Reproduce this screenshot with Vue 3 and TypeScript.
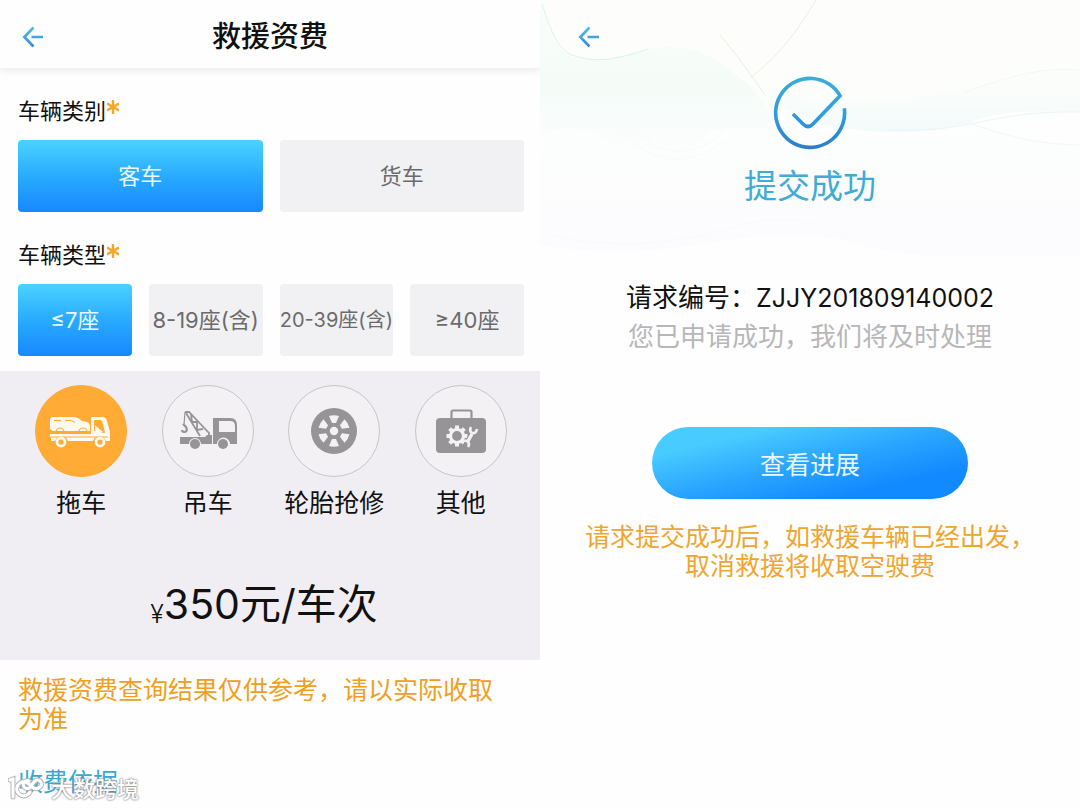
<script setup lang="ts">
import { ref } from 'vue'

type Service = 'tow' | 'crane' | 'tire' | 'other'

const categories: string[] = ['客车', '货车']
const seats: { label: string; small?: boolean }[] = [
  { label: '≤7座' },
  { label: '8-19座(含)' },
  { label: '20-39座(含)', small: true },
  { label: '≥40座' },
]
const services: { id: Service; label: string }[] = [
  { id: 'tow', label: '拖车' },
  { id: 'crane', label: '吊车' },
  { id: 'tire', label: '轮胎抢修' },
  { id: 'other', label: '其他' },
]

const category = ref('客车')
const seat = ref('≤7座')
const service = ref<Service>('tow')
const spokes = [0, 60, 120, 180, 240, 300]
const teeth = [0, 45, 90, 135, 180, 225, 270, 315]
</script>

<template>
  <div class="page">
    <main class="screen">
      <header class="bar">
        <button class="back" type="button" aria-label="返回">
          <svg width="22" height="24" viewBox="0 0 22 24">
            <defs>
              <linearGradient id="arrowA" x1="0" y1="0" x2="0" y2="24" gradientUnits="userSpaceOnUse">
                <stop offset="0" stop-color="#4fc4ea" />
                <stop offset="1" stop-color="#3583d3" />
              </linearGradient>
            </defs>
            <path d="M11.500 2.500 2.300 12l9.200 9.500M9.500 12H21" fill="none" stroke="url(#arrowA)" stroke-width="2.600" />
          </svg>
        </button>
        <h1>救援资费</h1>
      </header>

      <section class="field">
        <h2>车辆类别<span class="star"><svg width="12" height="14" viewBox="0 0 12 14"><path d="M6 0v14M0 3.500l12 7M12 3.500l-12 7" stroke="#f3a72c" stroke-width="2.400" /></svg></span></h2>
        <div class="options two">
          <button v-for="c in categories" :key="c" type="button" class="option" :class="{ active: category === c }" :aria-pressed="category === c" @click="category = c">{{ c }}</button>
        </div>
      </section>

      <section class="field second">
        <h2>车辆类型<span class="star"><svg width="12" height="14" viewBox="0 0 12 14"><path d="M6 0v14M0 3.500l12 7M12 3.500l-12 7" stroke="#f3a72c" stroke-width="2.400" /></svg></span></h2>
        <div class="options four">
          <button v-for="s in seats" :key="s.label" type="button" class="option" :class="{ active: seat === s.label, small: s.small }" :aria-pressed="seat === s.label" @click="seat = s.label">{{ s.label }}</button>
        </div>
      </section>

      <section class="quote">
        <div class="services">
          <button v-for="s in services" :key="s.id" type="button" class="service" :class="{ chosen: service === s.id }" :aria-pressed="service === s.id" @click="service = s.id">
            <span class="disc">
              <svg v-if="s.id === 'tow'" viewBox="0 0 92 92" class="glyph">
                <path fill="currentColor" d="M15 35q0-3 4-3h19q5 0 9 4l5 1q3 1 3 5v4H18l-3-2v-9z" />
                <path class="cut-line" stroke-width="1" d="M19 35.500h7M30 35.500h6l4 2" />
                <path class="cut-line" stroke-width="1.200" d="M21 47a4 4 0 0 1 8 0M44 47a4 4 0 0 1 8 0" />
                <path fill="currentColor" fill-rule="evenodd" d="M15 49h41V32h11q4 0 5 4l3 11v9h-4a7 7 0 0 0-13 0H33a7 7 0 0 0-13 0h-4v-4h-1zM59 35v11h3l7 2h1l-2-9q-1-4-3-4z" />
                <path fill="currentColor" d="M60 40l8 7h-8z" />
                <path class="cut-line" stroke-width="1.200" d="M16 52h57" />
                <circle fill="none" stroke="currentColor" stroke-width="2.800" cx="26" cy="57" r="4" /><circle fill="none" stroke="currentColor" stroke-width="2.800" cx="65" cy="57" r="4" />
              </svg>
              <svg v-else-if="s.id === 'crane'" viewBox="0 0 92 92" class="glyph">
                <path fill="currentColor" fill-rule="evenodd" d="M18 52h25l2-2h5v9H39a6 6 0 0 0-12 0h-9zM51 33h17q7 0 7 7v19h-7a6 6 0 0 0-13 0h-4zM57 36v11h16v-6q0-5-5-5z" />
                <path fill="none" stroke="currentColor" stroke-width="1.800" d="M23 27h4l20 21v3M24 28l14 23M29 29l1 8 5 0 0 8 6-1" />
                <path fill="none" stroke="currentColor" stroke-width="1.200" d="M23 27l-1 13" />
                <path fill="none" stroke="currentColor" stroke-width="2.200" d="M21 39l3 3q2 4-1 5-3 0-3-2" />
                <circle fill="currentColor" cx="33" cy="59" r="5" /><circle fill="currentColor" cx="61" cy="59" r="5" />
              </svg>
              <svg v-else-if="s.id === 'tire'" viewBox="0 0 92 92" class="glyph">
                <circle fill="currentColor" cx="46" cy="46" r="23" />
                <path v-for="a in spokes" :key="a" class="cut-fill" d="M41 31q5-1.500 10 0l-3 7h-4z" :transform="`rotate(${a} 46 46)`" />
                <circle class="cut-fill" cx="46" cy="46" r="4.200" />
              </svg>
              <svg v-else viewBox="0 0 92 92" class="glyph">
                <rect x="21" y="33" width="50" height="35" rx="4" fill="currentColor" />
                <rect x="36.500" y="25.500" width="20" height="10" rx="1.500" fill="none" stroke="currentColor" stroke-width="2.200" />
                <circle class="cut-line" cx="42" cy="51" r="6.500" stroke-width="3.200" />
                <rect v-for="a in teeth" :key="a" class="cut-fill" x="40" y="40.500" width="4" height="4" :transform="`rotate(${a} 42 51)`" />
                <path d="M50 62l8-14" stroke="currentColor" stroke-width="6" />
                <path class="cut-line" stroke-width="3.400" d="M52.500 57l4.500-8" />
                <path class="cut-line" stroke-width="2.600" d="M56 42q-2 4 1 6 4 1 5-4M49 56q2-1 4 1 2 2 0 5" />
              </svg>
            </span>
            <span class="service-name">{{ s.label }}</span>
          </button>
        </div>
        <p class="price"><span class="yen">¥</span><span>350元/车次</span></p>
      </section>

      <footer class="notes">
        <p>救援资费查询结果仅供参考，请以实际收取为准</p>
        <a href="#basis">收费依据</a>
      </footer>

      <div class="watermark">
        <svg width="40" height="28" viewBox="0 0 40 28" fill="none" stroke-linecap="round">
          <g class="mark-edge"><path d="M2 5l3-1v18" /><path d="M22 17a7 7 0 1 1-5-10q4 1 7 5 5 4 9-1a4 4 0 1 0-7-4l-3 4a4 4 0 1 1-2-5" /></g>
          <g class="mark-face"><path d="M2 5l3-1v18" /><path d="M22 17a7 7 0 1 1-5-10q4 1 7 5 5 4 9-1a4 4 0 1 0-7-4l-3 4a4 4 0 1 1-2-5" /></g>
        </svg>
        <span>大数跨境</span>
      </div>
    </main>

    <main class="screen result">
      <svg class="waves" viewBox="0 0 540 260" preserveAspectRatio="none" aria-hidden="true">
        <defs>
          <linearGradient id="mist" x1="0" y1="0" x2="0" y2="1">
            <stop offset="0" stop-color="#f6fcf8" stop-opacity=".5" />
            <stop offset=".55" stop-color="#f3fbf7" stop-opacity=".9" />
            <stop offset="1" stop-color="#fbfdfd" stop-opacity=".2" />
          </linearGradient>
          <linearGradient id="band" x1="0" y1="60" x2="0" y2="132" gradientUnits="userSpaceOnUse">
            <stop offset="0" stop-color="#fcfefa" stop-opacity=".2" />
            <stop offset="1" stop-color="#f2fafa" />
          </linearGradient>
          <linearGradient id="haze" x1="0" y1="100" x2="0" y2="250" gradientUnits="userSpaceOnUse">
            <stop offset="0" stop-color="#fdfefd" />
            <stop offset="1" stop-color="#fcfcfe" />
          </linearGradient>
        </defs>
        <path fill="#fdfefc" d="M0 0h540v120H0z" />
        <path fill="url(#haze)" d="M0 110h540v145c-110 0-160 8-240-15-100-20-160 28-300 5z" />
        <path fill="url(#mist)" d="M0 0c10 35 18 52 34 58 26 5 54-2 80-10 50-6 70 18 90 33 16 12 25 36 36 47-50 2-50 0-70 4-30 35-65 30-95 15-25-20-50-25-75-10z" />
        <path fill="url(#band)" d="M218 84c40 20 82 16 132 16 70-5 120-30 190-30v42c-80-4-110 18-180 20-60 0-110-10-142-48z" />
        <path fill="#fefefe" d="M430 122c30-12 70-12 110-9v30c-30 2-65-10-110-21z" />
        <g fill="none" stroke-width="1">
          <path stroke="#dcf1ea" d="M2 4c10 32 18 46 30 51 24 9 46 4 76-6" />
          <path stroke="#e8efdb" d="M276 0c-15 25-35 55-66 78M180 35c15 18 30 38 45 60" />
          <path stroke="#f3f8ef" d="M425 92c30-10 70-26 115-22" />
          <path stroke="#ebf5f8" d="M350 130c80 4 100-20 190-18" />
          <path stroke="#f4f8f1" d="M430 123c30 12 70 22 110 22" />
          <path stroke="#f8fbfa" d="M75 120c25 45 75 50 110 20M85 118c25 40 70 42 98 14" />
          <path stroke="#fafafd" d="M0 232c60 18 130 14 190-4s90-4 120 12" />
        </g>
      </svg>
      <header class="bar plain">
        <button class="back" type="button" aria-label="返回">
          <svg width="22" height="24" viewBox="0 0 22 24">
            <path d="M11.500 2.500 2.300 12l9.200 9.500M9.500 12H21" fill="none" stroke="url(#arrowA)" stroke-width="2.600" />
          </svg>
        </button>
      </header>
      <div class="content">
        <svg class="check" width="74" height="74" viewBox="0 0 74 74" fill="none">
          <defs>
            <linearGradient id="ring" x1="0" y1="0" x2="0" y2="74" gradientUnits="userSpaceOnUse">
              <stop offset="0" stop-color="#3cadd3" />
              <stop offset=".5" stop-color="#2c9fe0" />
              <stop offset="1" stop-color="#2b7ccd" />
            </linearGradient>
          </defs>
          <path stroke="url(#ring)" stroke-width="3.600" d="M71.300 32.200a34.500 34.500 0 1 1-4.200-12.400L40 48q-5 5-10 0L20 38" />
        </svg>
        <h1 class="done">提交成功</h1>
        <p class="number">请求编号：<span class="code">ZJJY201809140002</span></p>
        <p class="hint">您已申请成功，我们将及时处理</p>
        <button class="progress" type="button">查看进展</button>
        <p class="warn">请求提交成功后，如救援车辆已经出发，<br />取消救援将收取空驶费</p>
      </div>
    </main>
  </div>
</template>

<style>
body {
  margin: 0;
  background: #fefefe;
}
</style>

<style scoped>
.page {
  display: grid;
  grid-template-columns: 1fr 1fr;
  min-height: 100vh;
  overflow: hidden;
  background: #fefefe;
  color: #111;
  font-family: Inter, "Noto Sans CJK SC", sans-serif;
}
.screen {
  position: relative;
  min-width: 0;
}
h1, h2, p {
  margin: 0;
  font-weight: 400;
}
button {
  padding: 0;
  border: 0;
  background: none;
  font: inherit;
  color: inherit;
  cursor: pointer;
}
svg {
  display: block;
}
.bar {
  display: grid;
  grid-template-columns: 44px 1fr 44px;
  align-items: center;
  height: 68px;
  padding-top: 5px;
  box-sizing: border-box;
  box-shadow: 0 2px 8px rgba(0, 0, 0, 0.09);
}
.bar h1 {
  font-size: 29px;
  line-height: 40px;
  font-weight: 500;
  text-align: center;
}
.back {
  display: flex;
  justify-content: flex-end;
}
.plain {
  position: relative;
  padding-left: 16px;
  box-shadow: none;
}
.field {
  padding: 28px 16px 0 18px;
}
.second {
  padding-bottom: 15px;
}
.field h2 {
  display: flex;
  font-size: 22px;
  line-height: 30px;
  margin-bottom: 14px;
}
.star {
  padding: 4px 0 0 1px;
}
.options {
  display: grid;
  gap: 17px;
}
.two {
  grid-template-columns: 1fr 1fr;
}
.four {
  grid-template-columns: repeat(4, 1fr);
}
.option {
  height: 72px;
  min-width: 0;
  border-radius: 4px;
  background: #f1f1f3;
  color: #6b6b6d;
  font-size: 22px;
  line-height: 32px;
  white-space: nowrap;
}
.option.small {
  font-size: 20px;
}
.option.active {
  background: linear-gradient(#4bd2ff, #28abff 50%, #1788ff);
  color: #e9f9ff;
}
.quote {
  padding: 14px 16px 27px 18px;
  background: #f0eef3;
}
.services {
  display: grid;
  grid-template-columns: repeat(4, 1fr);
}
.service {
  display: flex;
  flex-direction: column;
  align-items: center;
  gap: 8px;
}
.disc {
  width: 92px;
  height: 92px;
  box-sizing: border-box;
  border: 1px solid #c7c5c8;
  border-radius: 50%;
  background: #f3f1f4;
  color: #969496;
}
.chosen .disc {
  border-color: #ffab36;
  background: #ffab36;
  color: #fffaf0;
}
.glyph {
  width: 92px;
  height: 92px;
  margin: -1px;
}
.cut-fill {
  fill: #f3f1f4;
}
.cut-line {
  fill: none;
  stroke: #f3f1f4;
}
.chosen .cut-fill {
  fill: #ffab36;
}
.chosen .cut-line {
  stroke: #ffab36;
}
.service-name {
  font-size: 25px;
  line-height: 36px;
}
.price {
  display: flex;
  justify-content: center;
  align-items: flex-end;
  margin-top: 54px;
  padding-right: 14px;
  font-size: 41px;
  line-height: 58px;
}
.yen {
  font-size: 25px;
  line-height: 38px;
  font-weight: 300;
}
.notes {
  padding: 16px 40px 0 18px;
  font-size: 25px;
  line-height: 29px;
  color: #f09f23;
}
.notes a {
  display: inline-block;
  margin-top: 34px;
  color: #35a9d4;
  text-decoration: none;
}
.watermark {
  position: absolute;
  left: 8px;
  top: 775px;
  display: flex;
  align-items: center;
  gap: 3px;
  color: #fff;
  font-size: 22px;
  line-height: 28px;
  font-weight: 500;
  text-shadow: 0 0 2px #777, 0 0 2px #999;
  pointer-events: none;
}
.mark-edge {
  stroke: #b5b5b5;
  stroke-width: 5;
}
.mark-face {
  stroke: #fff;
  stroke-width: 3;
}
.waves {
  position: absolute;
  inset: 0 0 auto;
  width: 100%;
  height: 260px;
}
.content {
  position: relative;
  display: flex;
  flex-direction: column;
  align-items: center;
  padding-top: 8px;
  text-align: center;
}
.done {
  margin-top: 12px;
  font-size: 33px;
  line-height: 48px;
  color: #3fabd7;
}
.number {
  margin-top: 69px;
  font-size: 26px;
  line-height: 38px;
}
.code {
  font-size: 25px;
}
.hint {
  font-size: 26px;
  line-height: 39px;
  color: #b7b7b9;
}
.progress {
  width: 316px;
  max-width: 90%;
  height: 72px;
  margin-top: 71px;
  border-radius: 36px;
  background: linear-gradient(167deg, #48cbff 20%, #2aa5ff 50%, #128aff 78%);
  color: #e9f8ff;
  font-size: 25px;
}
.warn {
  margin-top: 24px;
  font-size: 25px;
  line-height: 29px;
  color: #efa530;
}
</style>
